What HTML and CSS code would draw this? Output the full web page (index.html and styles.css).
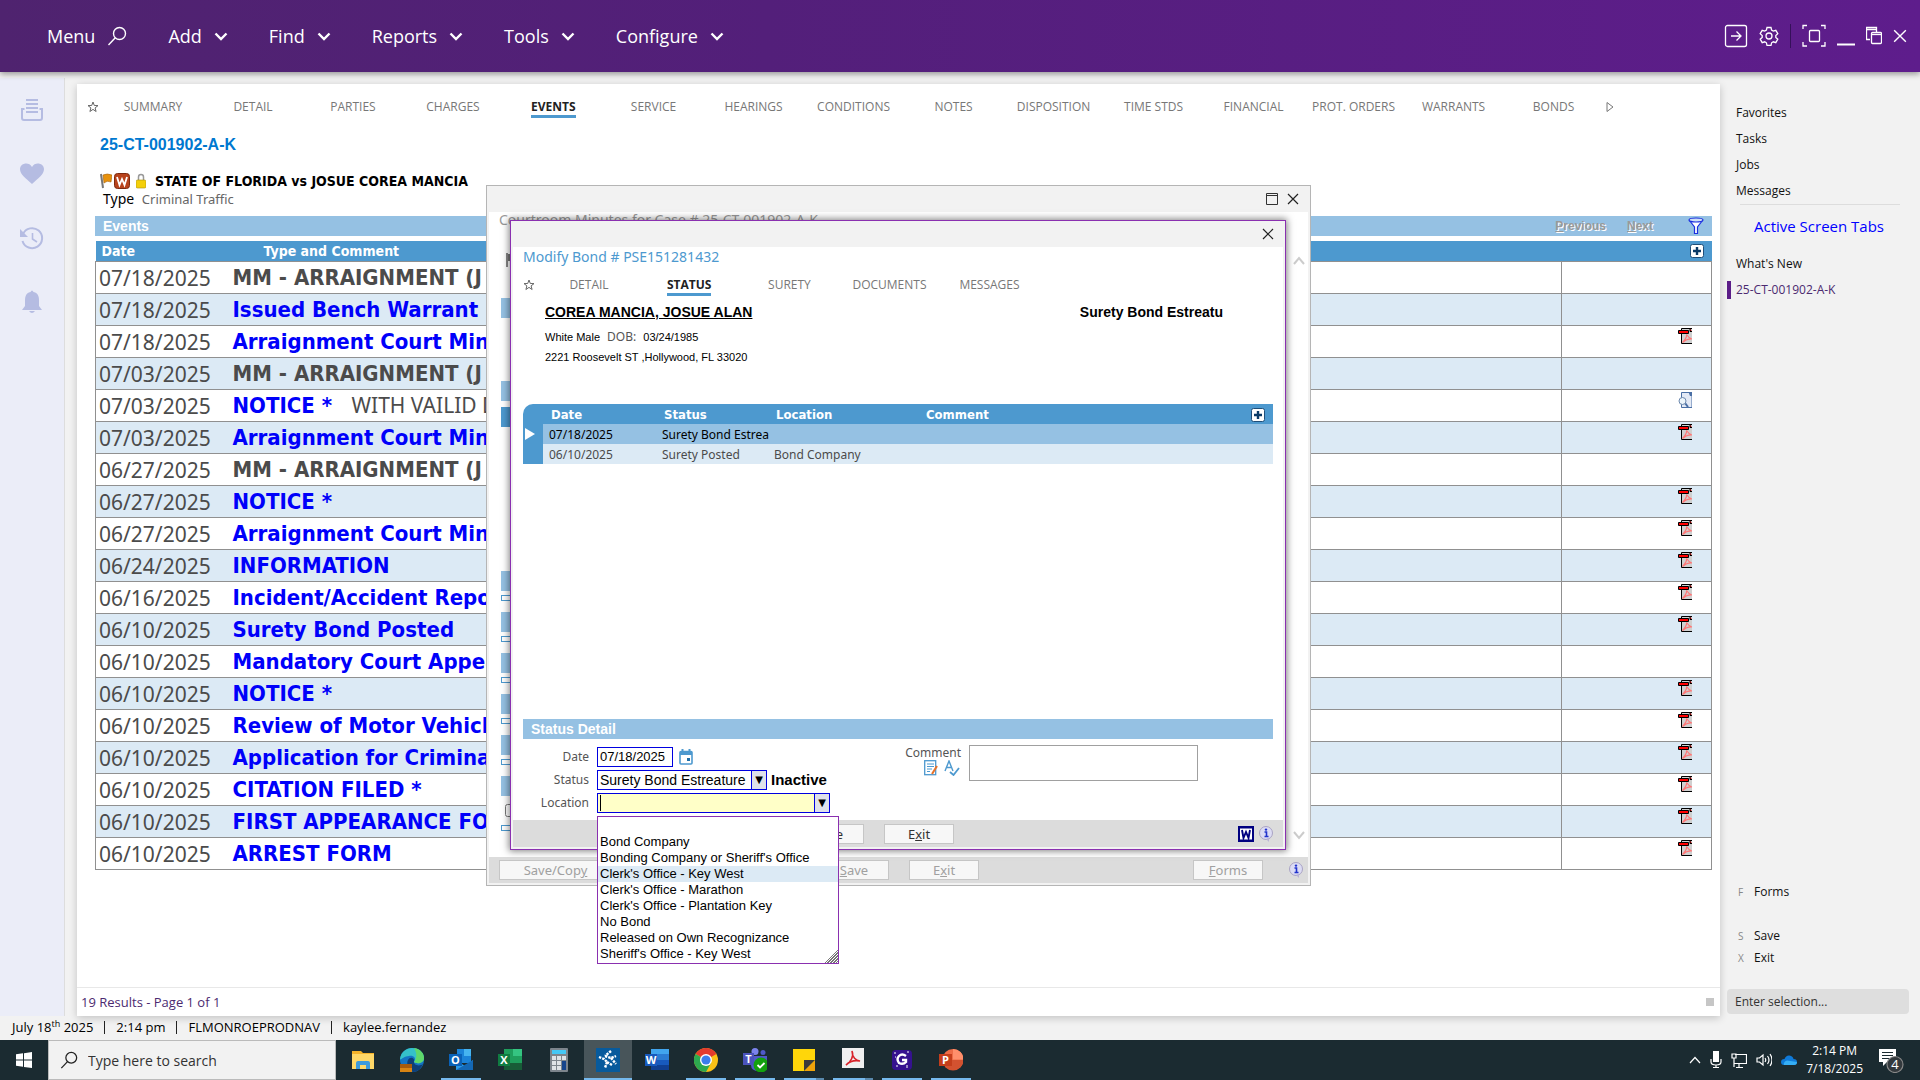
FILE: index.html
```
<!DOCTYPE html>
<html lang="en">
  <head>
    <meta charset="UTF-8" />
    <meta name="viewport" content="width=device-width, initial-scale=1.0" />
    <title>25-CT-001902-A-K</title>
    <link rel="stylesheet" href="styles.css">
  </head>
  <body>
    <!-- shared icons -->
    <svg class="symbols" aria-hidden="true">
      <symbol id="chev" viewBox="0 0 14 14"><path d="M1.500 4.500 7 10l5.500-5.500" fill="none" stroke="currentColor" stroke-width="2.4" /></symbol>
      <symbol id="star" viewBox="0 0 12 12"><path d="M6 1l1.300 3.500 3.700.1-2.900 2.300 1 3.600L6 8.400l-3.100 2.100 1-3.600L1 4.600l3.700-.1z" fill="none" stroke="#666" /></symbol>
      <symbol id="close" viewBox="0 0 12 12"><path d="M1 1l10 10M11 1 1 11" fill="none" stroke="currentColor" stroke-width="1.2" /></symbol>
      <symbol id="search" viewBox="0 0 20 20"><circle cx="12.500" cy="7.500" r="6" fill="none" stroke="currentColor" stroke-width="1.4" /><path d="M8.300 11.800 1.500 19" stroke="currentColor" stroke-width="1.4" /></symbol>
      <symbol id="plus" viewBox="0 0 14 14"><rect x=".5" y=".5" width="13" height="13" rx="2" fill="#fff" stroke="#1f4e79" /><path d="M7 3v8M3 7h8" stroke="#0b3a66" stroke-width="2.4" /></symbol>
      <symbol id="pdf" viewBox="0 0 14 16"><path d="M3.500.5H14v15H3.500z" fill="#d0d0d0" /><path d="M14 .5H3.500v15H14" fill="none" stroke="#000" /><path d="M12 .5v3h2" fill="#e00" stroke="#000" /><path d="M4.500 14.500C7 12 9 9 8.500 6.500c2 3 3 4 5.500 4.500-3-.5-6 .5-9.500 3.500" fill="none" stroke="#f77" stroke-width="1.2" /><path d="M.5 2.500h10v3H.5z" fill="#f00" stroke="#000" /></symbol>
      <symbol id="preview" viewBox="0 0 14 16"><path d="M3.500.5h8L14 3v12.500H3.500z" fill="#e3e9f5" stroke="#4a6fa5" /><path d="M10.500 0H14v4h-2z" fill="#4a6fa5" /><path d="M7 11l3 4" stroke="#4a6fa5" stroke-width="2" /><circle cx="4.500" cy="9" r="3.500" fill="#eef6fb" stroke="#6b87ad" /></symbol>
      <symbol id="info" viewBox="0 0 16 16"><circle cx="8" cy="7" r="6.500" fill="#dcdcf4" stroke="#a9a3c4" /><path d="M8 13l3 3V12z" fill="#b9b3d6" /><path d="M6.500 6H8.500v4.500M6.500 10.500h4" stroke="#2233cc" stroke-width="1.6" fill="none" /><circle cx="8" cy="3.600" r="1.200" fill="#2233cc" /></symbol>
    </svg>

    <header class="topbar">
      <nav class="menu">
        <a href="#">Menu <svg width="20" height="20"><use href="#search" /></svg></a>
        <a href="#">Add <svg width="14" height="14"><use href="#chev" /></svg></a>
        <a href="#">Find <svg width="14" height="14"><use href="#chev" /></svg></a>
        <a href="#">Reports <svg width="14" height="14"><use href="#chev" /></svg></a>
        <a href="#">Tools <svg width="14" height="14"><use href="#chev" /></svg></a>
        <a href="#">Configure <svg width="14" height="14"><use href="#chev" /></svg></a>
      </nav>
      <div class="window-tools">
        <button aria-label="Sign out"><svg width="24" height="24" viewBox="0 0 24 24"><rect x="1.500" y="1.500" width="21" height="21" rx="2" /><path d="M7 12h9.500M12.500 7.500 17 12l-4.500 4.500" /></svg></button>
        <button aria-label="Settings"><svg width="20" height="20" viewBox="0 0 20 20"><circle cx="10" cy="10" r="3" /><path d="M8 1.500h4l.6 2.600 1.700 1 2.500-.8 2 3.400-2 1.800v1.900l2 1.800-2 3.400-2.500-.8-1.700 1-.6 2.500H8l-.6-2.500-1.700-1-2.500.8-2-3.400 2-1.800V9.500l-2-1.800 2-3.400 2.500.8 1.700-1z" /></svg></button>
        <span class="tool-line"></span>
        <button aria-label="Fit"><svg width="24" height="24" viewBox="0 0 24 24"><rect x="7.500" y="6.500" width="10" height="11" rx="1" /><path d="M1 5V1.500h4M19 1.500h4V5M1 18v4h4M19 22h4v-4" /></svg></button>
        <button aria-label="Minimize"><svg width="18" height="24" viewBox="0 0 18 24"><path d="M0 20.500h18" stroke-width="2" /></svg></button>
        <button aria-label="Restore"><svg width="16" height="20" viewBox="0 0 16 20"><path d="M4 13.500H.5v-12h10V6M.5 3.500h10" /><rect x="5.500" y="6.500" width="10" height="11" rx="1" /><path d="M5.500 8.500h10" /></svg></button>
        <button aria-label="Close"><svg width="14" height="14" viewBox="0 0 12 12"><use href="#close" /></svg></button>
      </div>
    </header>

    <div class="workspace">
      <aside class="rail">
        <svg width="24" height="24" viewBox="0 0 24 24"><path d="M6 2h12M6 6h12M6 10h12M6 14h12" stroke-width="2" /><path d="M4.500 11H2v9q0 2 2 2h16q2 0 2-2v-9h-2.500" stroke-width="2" /></svg>
        <svg width="24" height="24" viewBox="0 0 24 24"><path class="solid" d="M12 22C6 16 0 13 0 7c0-6 9-8 12-2 3-6 12-4 12 2 0 6-6 9-12 15z" /></svg>
        <svg width="24" height="24" viewBox="0 0 24 24"><path d="M3 8a10 10 0 1 1-.5 7" stroke-width="2" /><path class="solid" d="M0 3v8h8z" /><path d="M12.500 7v6l4.500 3" stroke-width="1.6" /></svg>
        <svg width="22" height="24" viewBox="0 0 22 24"><path class="solid" d="M9.500 2q1.500-3 3 0c5 1 5.500 5 5.500 9v5l3 4H1l3-4v-5c0-4 .5-8 5.500-9zM8 21h6q-3 4-6 0z" /></svg>
      </aside>

      <main class="case">
        <nav class="tabs">
          <svg width="12" height="12"><use href="#star" /></svg>
          <a href="#">SUMMARY</a><a href="#">DETAIL</a><a href="#">PARTIES</a><a href="#">CHARGES</a>
          <a href="#" class="active">EVENTS</a><a href="#">SERVICE</a><a href="#">HEARINGS</a>
          <a href="#">CONDITIONS</a><a href="#">NOTES</a><a href="#">DISPOSITION</a><a href="#">TIME STDS</a>
          <a href="#">FINANCIAL</a><a href="#">PROT. ORDERS</a><a href="#">WARRANTS</a><a href="#">BONDS</a>
          <svg width="8" height="12" viewBox="0 0 8 12"><path d="M1 1.500 7 6l-6 4.500z" fill="none" stroke="#777" /></svg>
        </nav>

        <div class="case-body">
          <h1>25-CT-001902-A-K</h1>
          <div class="case-title">
            <svg width="12" height="16" viewBox="0 0 12 16"><path d="M1 1l2 14" stroke="#777" stroke-width="2" /><path d="M3 2q4-2 9 0l-1 7q-4-2-7 1z" fill="#e8920c" stroke="#a65f08" stroke-width=".6" /></svg>
            <svg width="16" height="16" viewBox="0 0 16 16"><rect x=".5" y=".5" width="15" height="15" rx="3" fill="#b8431c" stroke="#7d2a10" /><path d="M3 4l2.500 8L8 6l2.500 6L13 4" fill="none" stroke="#fff" stroke-width="1.8" /></svg>
            <svg class="lock" width="10" height="16" viewBox="0 0 10 16"><path d="M2.500 8V4q0-2.500 2.500-2.500T7.500 4v4" fill="none" stroke="#999" stroke-width="1.5" /><rect y="7" width="10" height="8" rx="1.500" fill="#f4cf0a" stroke="#a98d0a" stroke-width=".6" /></svg>
            <b>STATE OF FLORIDA vs JOSUE COREA MANCIA</b>
          </div>
          <p class="case-type">Type <span>Criminal Traffic</span></p>

          <div class="section-bar">
            <h2>Events</h2>
            <button class="pager" disabled><u>P</u>revious</button>
            <button class="pager" disabled><u>N</u>ext</button>
            <svg width="16" height="18" viewBox="0 0 16 18"><path d="M1.500 3.500 6.500 10v6.500h3V10l5-6.500" fill="#fff" stroke="#1a2ee0" stroke-width="1.2" /><ellipse cx="8" cy="3" rx="7" ry="2" fill="#cfe0f5" stroke="#1a2ee0" stroke-width="1.2" /></svg>
          </div>

          <table class="events">
            <thead>
              <tr><th class="col-date">Date</th><th class="col-type">Type and Comment</th><th></th><th class="col-doc"><svg width="14" height="14"><use href="#plus" /></svg></th></tr>
            </thead>
            <tbody>
              <tr><td>07/18/2025</td><td><b>MM - ARRAIGNMENT (J</b></td><td></td><td></td></tr>
              <tr><td>07/18/2025</td><td><a href="#">Issued Bench Warrant</a></td><td></td><td></td></tr>
              <tr><td>07/18/2025</td><td><a href="#">Arraignment Court Min</a></td><td></td><td><svg><use href="#pdf" /></svg></td></tr>
              <tr><td>07/03/2025</td><td><b>MM - ARRAIGNMENT (J</b></td><td></td><td></td></tr>
              <tr><td>07/03/2025</td><td><a href="#">NOTICE *</a> <span class="note">WITH VAILID D</span></td><td></td><td><svg><use href="#preview" /></svg></td></tr>
              <tr><td>07/03/2025</td><td><a href="#">Arraignment Court Min</a></td><td></td><td><svg><use href="#pdf" /></svg></td></tr>
              <tr><td>06/27/2025</td><td><b>MM - ARRAIGNMENT (J</b></td><td></td><td></td></tr>
              <tr><td>06/27/2025</td><td><a href="#">NOTICE *</a></td><td></td><td><svg><use href="#pdf" /></svg></td></tr>
              <tr><td>06/27/2025</td><td><a href="#">Arraignment Court Min</a></td><td></td><td><svg><use href="#pdf" /></svg></td></tr>
              <tr><td>06/24/2025</td><td><a href="#">INFORMATION</a></td><td></td><td><svg><use href="#pdf" /></svg></td></tr>
              <tr><td>06/16/2025</td><td><a href="#">Incident/Accident Repo</a></td><td></td><td><svg><use href="#pdf" /></svg></td></tr>
              <tr><td>06/10/2025</td><td><a href="#">Surety Bond Posted</a></td><td></td><td><svg><use href="#pdf" /></svg></td></tr>
              <tr><td>06/10/2025</td><td><a href="#">Mandatory Court Appea</a></td><td></td><td></td></tr>
              <tr><td>06/10/2025</td><td><a href="#">NOTICE *</a></td><td></td><td><svg><use href="#pdf" /></svg></td></tr>
              <tr><td>06/10/2025</td><td><a href="#">Review of Motor Vehicl</a></td><td></td><td><svg><use href="#pdf" /></svg></td></tr>
              <tr><td>06/10/2025</td><td><a href="#">Application for Crimina</a></td><td></td><td><svg><use href="#pdf" /></svg></td></tr>
              <tr><td>06/10/2025</td><td><a href="#">CITATION FILED *</a></td><td></td><td><svg><use href="#pdf" /></svg></td></tr>
              <tr><td>06/10/2025</td><td><a href="#">FIRST APPEARANCE FO</a></td><td></td><td><svg><use href="#pdf" /></svg></td></tr>
              <tr><td>06/10/2025</td><td><a href="#">ARREST FORM</a></td><td></td><td><svg><use href="#pdf" /></svg></td></tr>
            </tbody>
          </table>
        </div>

        <footer class="results">19 Results - Page 1 of 1 <span class="grip"></span></footer>
      </main>

      <aside class="side">
        <a href="#">Favorites</a>
        <a href="#">Tasks</a>
        <a href="#">Jobs</a>
        <a href="#">Messages</a>
        <hr>
        <h3>Active Screen Tabs</h3>
        <a href="#">What's New</a>
        <a href="#" class="current">25-CT-001902-A-K</a>
        <div class="side-keys">
          <a href="#" class="forms-key"><kbd>F</kbd>Forms</a>
          <a href="#"><kbd>S</kbd>Save</a>
          <a href="#"><kbd>X</kbd>Exit</a>
        </div>
        <input type="text" aria-label="Enter selection" placeholder="Enter selection...">
      </aside>
    </div>

    <footer class="status">
      <span>July 18<sup>th</sup> 2025</span><i></i><span>2:14 pm</span><i></i><span>FLMONROEPRODNAV</span><i></i><span>kaylee.fernandez</span>
    </footer>

    <!-- courtroom minutes window -->
    <section class="window minutes">
      <div class="titlebar">
        <button aria-label="Maximize"><svg width="12" height="12" viewBox="0 0 12 12"><path d="M.5.5h11v11H.5zM.5 2.500h11" fill="none" stroke="#333" /></svg></button>
        <button aria-label="Close"><svg width="12" height="12"><use href="#close" /></svg></button>
      </div>
      <div class="minutes-body">
        <div class="minutes-content">
          <p>Courtroom Minutes for Case # 25-CT-001902-A-K</p>
          <svg class="flag" width="12" height="14" viewBox="0 0 12 14"><path d="M1 0v14" stroke="#888" stroke-width="2" /><path d="M2 1h9v7H2z" fill="#777" /></svg>
          <div class="bar first"></div>
          <div class="bar second"></div>
          <div class="bar dark"></div>
          <div class="bar third"></div><div class="line"></div>
          <div class="bar"></div><div class="line"></div>
          <div class="bar"></div><div class="line"></div>
          <div class="bar"></div><div class="line"></div>
          <div class="bar"></div><div class="line"></div>
          <div class="bar"></div>
          <input type="checkbox" aria-label="Include">
          <div class="line"></div>
        </div>
        <div class="scroll">
          <svg width="12" height="12" viewBox="0 0 12 12"><path d="M1 9l5-6 5 6" /></svg>
          <svg width="12" height="12" viewBox="0 0 12 12"><path d="M1 3l5 6 5-6" /></svg>
        </div>
      </div>
      <div class="button-bar">
        <button class="btn wide" disabled>Save/Cop<u>y</u></button>
        <button class="btn save" disabled><u>S</u>ave</button>
        <button class="btn" disabled>E<u>x</u>it</button>
        <button class="btn forms" disabled><u>F</u>orms</button>
        <svg width="16" height="16"><use href="#info" /></svg>
      </div>
    </section>

    <!-- modify bond window -->
    <section class="window bond">
      <div class="titlebar">
        <button aria-label="Close"><svg width="12" height="12"><use href="#close" /></svg></button>
      </div>
      <div class="bond-body">
        <h2>Modify Bond # PSE151281432</h2>
        <nav class="tabs">
          <svg width="12" height="12"><use href="#star" /></svg>
          <a href="#">DETAIL</a><a href="#" class="active">STATUS</a><a href="#">SURETY</a><a href="#">DOCUMENTS</a><a href="#">MESSAGES</a>
        </nav>
        <div class="person">
          <div>
            <a href="#" class="name">COREA MANCIA, JOSUE ALAN</a>
            <p>White Male <span class="dob">DOB:</span> 03/24/1985</p>
            <p>2221 Roosevelt ST ,Hollywood, FL 33020</p>
          </div>
          <b>Surety Bond Estreatu</b>
        </div>

        <table class="history">
          <thead>
            <tr><th class="gutter"></th><th class="h-date">Date</th><th class="h-status">Status</th><th class="h-location">Location</th><th>Comment</th><th class="h-add"><svg width="14" height="14"><use href="#plus" /></svg></th></tr>
          </thead>
          <tbody>
            <tr class="selected"><td class="gutter"><svg width="10" height="12" viewBox="0 0 10 12"><path d="M0 0l10 6-10 6z" fill="#fff" /></svg></td><td>07/18/2025</td><td>Surety Bond Estrea</td><td></td><td></td><td></td></tr>
            <tr><td class="gutter"></td><td>06/10/2025</td><td>Surety Posted</td><td>Bond Company</td><td></td><td></td></tr>
          </tbody>
        </table>

        <div class="section-bar detail-bar"><h2>Status Detail</h2></div>
        <form class="detail">
          <div class="fields">
            <div class="field">
              <label for="date">Date</label>
              <input id="date" type="text" value="07/18/2025">
              <svg width="14" height="16" viewBox="0 0 14 16"><rect x="1" y="2.500" width="12" height="12.500" rx="1" fill="#fff" stroke="#4d99cf" stroke-width="1.6" /><path d="M1 2h12v4H1z" fill="#4d99cf" /><path d="M3.500 0v3M10.500 0v3" stroke="#4d99cf" stroke-width="2" /><path d="M8 9h3v3H8z" fill="#1f6fa8" /></svg>
            </div>
            <div class="field">
              <label for="status">Status</label>
              <div class="combo combo-status">
                <select id="status"><option>Surety Bond Estreature</option></select>
              </div>
              <b>Inactive</b>
            </div>
            <div class="field">
              <label for="location">Location</label>
              <div class="combo combo-location">
                <select id="location"><option></option></select>
                <ul class="options" role="listbox">
                  <li></li>
                  <li>Bond Company</li>
                  <li>Bonding Company or Sheriff's Office</li>
                  <li class="hover">Clerk's Office - Key West</li>
                  <li>Clerk's Office - Marathon</li>
                  <li>Clerk's Office - Plantation Key</li>
                  <li>No Bond</li>
                  <li>Released on Own Recognizance</li>
                  <li>Sheriff's Office - Key West</li>
                </ul>
              </div>
            </div>
          </div>
          <div class="comment">
            <div class="comment-label">
              <label for="comment">Comment</label>
              <div>
                <svg width="14" height="16" viewBox="0 0 14 16"><rect x=".7" y=".7" width="11" height="14" fill="#fff" stroke="#4d99cf" stroke-width="1.3" /><path d="M3 4h7M3 6.500h7M3 9h5M3 11.500h3" stroke="#4d99cf" /><path d="M13 6l-5 8" stroke="#e8722a" stroke-width="2" /></svg>
                <svg width="16" height="16" viewBox="0 0 16 16"><path d="M1 11 5 1l4 10M2.500 7.500h5" fill="none" stroke="#4d99cf" stroke-width="1.4" /><path d="M6 12l3.500 3L15 8" fill="none" stroke="#4d99cf" stroke-width="1.8" /></svg>
              </div>
            </div>
            <textarea id="comment"></textarea>
          </div>
        </form>
      </div>
      <div class="button-bar">
        <button class="btn"><u>S</u>ave</button>
        <button class="btn">E<u>x</u>it</button>
        <svg class="word" width="16" height="16" viewBox="0 0 16 16"><path d="M0 0h16v16H0z" fill="#000080" /><path d="M2 2.500h12v11H2z" fill="#fff" /><path d="M4 4l1.500 8L8 6l2.500 6L12 4" fill="none" stroke="#000080" stroke-width="1.9" /></svg>
        <svg width="16" height="16"><use href="#info" /></svg>
      </div>
    </section>

    <!-- desktop taskbar -->
    <footer class="taskbar">
      <button class="start" aria-label="Start"><svg width="16" height="16" viewBox="0 0 16 16"><path d="M0 2.300 7 1.300v6.300H0zM8 1.200 16 0v7.600H8zM0 8.500h7v6.300l-7-1zM8 8.500h8V16l-8-1.100z" fill="#fff" /></svg></button>
      <label class="find"><svg width="18" height="18"><use href="#search" /></svg><input type="text" placeholder="Type here to search"></label>
      <div class="apps">
        <button aria-label="File Explorer"><svg viewBox="0 0 24 24"><path d="M1 3h9l2 2h11v16H1z" fill="#f5b32a" /><path d="M1 6h22v15H1z" fill="#ffd868" /><path d="M5 21v-6q0-2 2-2h10q2 0 2 2v6h-4v-4H9v4z" fill="#3d9bdc" /></svg></button>
        <button aria-label="Edge"><svg viewBox="0 0 24 24"><circle cx="12" cy="12" r="12" fill="#1474c4" /><path d="M0 11C1 4 6 0 12 0c8 0 12 5 12 10 0 6-8 6-10 4 3-4-1-7-5-6-5 0-9 5-9 3z" fill="#35c1c9" /><path d="M14 0c7 1 10 6 10 10 0 6-8 6-10 4 3-4 3-9 0-14z" fill="#5fd86a" /><path d="M8 12c2-4 7-2 6 1-1 4 5 6 9 3-2 5-6 8-10 8-5-3-7-8-5-12z" fill="#0e3f78" /><path d="M0 16h12v8H0z" fill="#d88413" /><path d="M0 16h12v4H0z" fill="#a65a0c" /></svg></button>
        <button class="open" aria-label="Outlook"><svg viewBox="0 0 24 24"><path d="M8 1h14v14H8z" fill="#1b83d8" /><path d="M15 1h7v7h-7z" fill="#46b4f0" /><path d="M7 12l9 6 8-6v10H7z" fill="#2899e8" /><path d="M24 12v10L7 22z" fill="#1468b5" /><path d="M0 6h13v12H0z" fill="#0a62b8" /><text x="6.500" y="16">O</text></svg></button>
        <button aria-label="Excel"><svg viewBox="0 0 24 24"><path d="M6 1h18v21H6z" fill="#1f9e5c" /><path d="M15 1h9v7h-9z" fill="#35c481" /><path d="M6 15h18v7H6z" fill="#185c37" /><path d="M0 6h12v12H0z" fill="#107c41" /><text x="6" y="16">X</text></svg></button>
        <button aria-label="Calculator"><svg viewBox="0 0 24 24"><rect x="3" width="18" height="24" rx="1" fill="#7d858c" /><path d="M5 2h14v4H5z" fill="#45c8f5" /><path d="M5 8h4v4H5zM10 8h4v4h-4zM15 8h4v4h-4zM5 13h4v4H5zM10 13h4v4h-4zM5 18h4v4H5zM10 18h4v4h-4z" fill="#dfe3e6" /><path d="M15 13h4v9h-4z" fill="#17458c" /></svg></button>
        <button class="open current" aria-label="Court system"><svg viewBox="0 0 24 24"><path d="M0 0h24v24H0z" fill="#075a9c" /><g fill="none" stroke="#fff" stroke-width="2.4" stroke-dasharray="2.4 1"><path d="M15 3 9 8M3 9l5 2 3 3M9 8l6 2 5-2M15 10l5 6M11 14l-2 6M11 14l5 3" /></g></svg></button>
        <button aria-label="Word"><svg viewBox="0 0 24 24"><path d="M6 1h18v21H6z" fill="#2b7cd3" /><path d="M6 1h18v5H6z" fill="#41a5ee" /><path d="M6 12h18v5H6z" fill="#185abd" /><path d="M6 17h18v5H6z" fill="#103f91" /><path d="M0 6h12v12H0z" fill="#185abd" /><text x="6" y="16">W</text></svg></button>
        <button class="open" aria-label="Chrome"><svg viewBox="0 0 24 24"><circle cx="12" cy="12" r="12" fill="#fbc116" /><path d="M12 12 1.600 6A12 12 0 0 1 22.400 6z" fill="#e33b2e" /><path d="M12 12 1.600 6A12 12 0 0 0 12 24l5-9z" fill="#2da94f" /><circle cx="12" cy="12" r="6" fill="#fff" /><circle cx="12" cy="12" r="4.600" fill="#3b7ded" /></svg></button>
        <button class="open" aria-label="Teams"><svg viewBox="0 0 24 24"><circle cx="12" cy="3.500" r="3.500" fill="#7b83eb" /><circle cx="20" cy="4.500" r="2.500" fill="#5059c9" /><path d="M6 8h18v7q0 8-8 8t-8-6z" fill="#5059c9" /><path d="M0 5h11v12H0z" fill="#4b53bc" /><text x="5.500" y="15">T</text><circle cx="18" cy="17" r="7.500" fill="#13a10e" /><path d="M14.500 17l2.500 2.500 4.500-4.500" fill="none" stroke="#fff" stroke-width="1.8" /></svg></button>
        <button class="open multi" aria-label="Sticky Notes"><svg viewBox="0 0 24 24"><path d="M1 1h22v22H1z" fill="#ffd60a" /><path d="M12 23h11V12z" fill="#f0a30a" /><path d="M12 12h11L12 23z" fill="#3b3b3b" /></svg></button>
        <button class="open multi" aria-label="Acrobat"><svg viewBox="0 0 24 24"><path d="M1 0h22v20H1z" fill="#f0f0f0" /><path d="M5 17c5-3 8-9 6-14 0 6 4 10 8 10-5-1-10 0-14 4z" fill="none" stroke="#d8232a" stroke-width="1.6" /></svg></button>
        <button class="open" aria-label="Snagit"><svg viewBox="0 0 24 24"><rect x="2" y="2" width="20" height="20" rx="4" fill="#35128f" /><path d="M16 8q-4-3-7 0t0 7q4 2 7-1v-2h-4" fill="none" stroke="#fff" stroke-width="2.4" /><path d="M4 5h2M5 9h1M17 4h2M6 18h2M17 17v3" stroke="#fff" /></svg></button>
        <button class="open" aria-label="PowerPoint"><svg viewBox="0 0 24 24"><circle cx="14" cy="11.500" r="10.500" fill="#ed6c47" /><path d="M14 1a10.500 10.500 0 0 1 10.500 10.500H14z" fill="#ff8f6b" /><path d="M3.500 12h21a10.500 10.500 0 0 1-21 0z" fill="#d35230" /><path d="M0 6h13v12H0z" fill="#c43e1c" /><text x="6.500" y="16">P</text></svg></button>
      </div>
      <div class="tray">
        <svg width="12" height="8" viewBox="0 0 12 8"><path d="M1 7l5-5.500L11 7" /></svg>
        <svg width="12" height="18" viewBox="0 0 12 18"><rect x="3" width="6" height="11" fill="#fff" stroke="none" /><path d="M1 8v3q0 3 5 3t5-3V8M6 14v3M3 16.500h6" /></svg>
        <svg width="16" height="16" viewBox="0 0 16 16"><path d="M4 2.500h11.500v9H3M8 12v3M5 15.500h7M1 2h4v4H1zM3 6v9" /></svg>
        <svg width="16" height="14" viewBox="0 0 16 14"><path d="M1 5v4h2.500L7 12V2L3.500 5zM9 5q1.500 2 0 4M11.500 3q3 4 0 8M14 1q4 6 0 12" /></svg>
        <svg width="16" height="12" viewBox="0 0 16 12"><path d="M3 11Q0 11 0 8t3.500-3Q5 1 8.500 1.500 12 2 12.500 5 16 5 16 8t-3 3z" fill="#0f7ad8" stroke="none" /><path d="M3 11Q2 8 6 6.500L16 8q0 3-3 3z" fill="#35aef5" stroke="none" /></svg>
        <div class="clock"><span>2:14 PM</span><span>7/18/2025</span></div>
        <svg width="26" height="26" viewBox="0 0 26 26"><path d="M1 2h17v13h-9l-4 4v-4H1z" fill="#fff" stroke="none" /><path d="M4 5.500h11M4 8.500h11M4 11.500h7" stroke="#1b2b31" /><circle cx="17" cy="17.500" r="8" fill="#33393d" stroke="#888" /><text x="17" y="22">4</text></svg>
      </div>
    </footer>
  </body>
</html>
```
FILE: styles.css
```
* {
  box-sizing: border-box;
}
body {
  margin: 0;
  height: 100vh;
  display: flex;
  flex-direction: column;
  overflow: hidden;
  background: #f2f2f2;
  color: #222;
  font-family: "Open Sans", sans-serif;
  font-size: 12px;
}
h1, h2, h3, p, ul {
  margin: 0;
  padding: 0;
}
a {
  color: inherit;
  text-decoration: none;
}
svg {
  flex: none;
  display: block;
}
button {
  padding: 0;
  border: none;
  background: none;
  color: inherit;
  font: inherit;
}
.symbols {
  position: absolute;
  width: 0;
  height: 0;
}

/* top bar */
.topbar {
  flex: none;
  height: 72px;
  padding: 0 13px 0 47px;
  display: flex;
  align-items: center;
  justify-content: space-between;
  background: linear-gradient(to right, #4f236f, #531f7a 40%, #5e1d8c);
  box-shadow: 0 2px 6px rgba(0, 0, 0, 0.4);
  color: #fff;
  z-index: 1;
}
.menu {
  display: flex;
  gap: 41px;
}
.menu a {
  display: flex;
  align-items: center;
  gap: 12px;
  font-size: 18px;
}
.window-tools {
  display: flex;
  align-items: center;
  gap: 11px;
}
.window-tools svg {
  fill: none;
  stroke: #fff;
  stroke-width: 1.3;
}
.tool-line {
  width: 1px;
  height: 24px;
  background: #35105a;
}

.workspace {
  flex: 1;
  min-height: 0;
  display: flex;
}

/* left rail */
.rail {
  width: 65px;
  margin-top: 6px;
  padding-top: 20px;
  display: flex;
  flex-direction: column;
  align-items: center;
  gap: 40px;
  background: #ebedf8;
  border-right: 1px solid #ddd;
}
.rail svg {
  fill: none;
  stroke: #b5bce2;
}
.rail .solid {
  fill: #b5bce2;
  stroke: none;
}

/* case panel */
.case {
  flex: 1;
  min-width: 0;
  margin: 12px 0 0 12px;
  display: flex;
  flex-direction: column;
  background: #fff;
  box-shadow: 0 2px 8px rgba(0, 0, 0, 0.2);
}
.tabs {
  display: flex;
  align-items: center;
}
.tabs a {
  width: 100px;
  display: flex;
  justify-content: center;
  color: #777;
  line-height: 16px;
  padding-bottom: 3px;
  margin-top: 3px;
  white-space: nowrap;
}
.tabs .active {
  width: auto;
  margin-left: 28px;
  margin-right: 28px;
  padding-bottom: 0;
  border-bottom: 3px solid #4d99cf;
  color: #222;
  font-weight: bold;
}
.case .tabs {
  padding: 12px 0 0 10px;
}
.tabs svg + a {
  margin-left: 4px;
}
.case .tabs a + svg {
  margin-left: 2px;
}
.case-body {
  flex: 1;
  padding: 17px 8px 0 18px;
}
.case-body h1 {
  padding-left: 5px;
  color: #0078d0;
  font: bold 16px/20px "Liberation Sans", sans-serif;
}
.case-title {
  margin-top: 16px;
  padding-left: 5px;
  display: flex;
  align-items: flex-end;
  gap: 2px;
  height: 18px;
  color: #000;
  font: 14px/16px "DejaVu Sans Condensed", "Noto Sans", sans-serif;
}
.case-title .lock {
  margin: 0 7px 0 4px;
}
.case-type {
  padding-left: 8px;
  color: #000;
  font: 14px/20px "Noto Sans", sans-serif;
}
.case-type span {
  margin-left: 4px;
  color: #666;
  font-size: 13px;
}
.section-bar {
  height: 20px;
  padding-left: 8px;
  display: flex;
  align-items: center;
  background: #95c1e3;
}
.section-bar h2 {
  flex: 1;
  color: #fff;
  font: bold 14px/20px "Liberation Sans", sans-serif;
}
.case .section-bar {
  margin-top: 7px;
  padding-right: 8px;
}
.pager {
  margin-right: 21px;
  color: #999;
  text-shadow: 1px 1px #fff;
  font: bold 12px/20px "Liberation Sans", sans-serif;
}
.pager + svg {
  margin-left: 14px;
}

.events {
  width: 100%;
  margin-top: 5px;
  border-collapse: collapse;
  table-layout: fixed;
  color: #4b4b4b;
  font: 21px/24px "Noto Sans", sans-serif;
}
.events th {
  height: 20px;
  padding: 0 6px;
  background: #4d99cf;
  color: #fff;
  font: bold 14px/20px "DejaVu Sans Condensed", "Noto Sans", sans-serif;
  text-align: left;
}
.events .col-date {
  width: 134px;
}
.events .col-type {
  width: 760px;
  padding-left: 34px;
}
.events .col-doc {
  width: 150px;
  padding-right: 8px;
}
.col-doc svg {
  margin-left: auto;
}
.events td {
  height: 32px;
  padding: 0 3px;
  border-top: 1px solid #909090;
  border-bottom: 1px solid #909090;
  white-space: nowrap;
}
.events td:first-child {
  border-left: 1px solid #909090;
}
.events td:last-child {
  padding: 2px 19px 0 0;
  border-left: 1px solid #909090;
  border-right: 1px solid #909090;
  vertical-align: top;
}
.events td svg {
  width: 14px;
  height: 16px;
  margin-left: auto;
}
.events tbody tr:nth-child(even) {
  background: #dceaf5;
}
.events td a,
.events td b {
  font: bold 22px/24px "DejaVu Sans Condensed", "Noto Sans", sans-serif;
}
.events td a {
  color: #0000fa;
}
.note {
  margin-left: 14px;
}
.results {
  height: 29px;
  padding: 0 6px 0 4px;
  display: flex;
  align-items: center;
  justify-content: space-between;
  border-top: 1px solid #e8e8e8;
  color: #4b2a70;
  font-size: 13px;
}
.grip {
  width: 8px;
  height: 8px;
  background: #c6c6c6;
}

/* right sidebar */
.side {
  width: 200px;
  padding: 28px 11px 2px 7px;
  display: flex;
  flex-direction: column;
  color: #111;
}
.side a {
  height: 18px;
  margin: 4px 0;
  padding-left: 9px;
  line-height: 18px;
}
.side hr {
  width: 160px;
  margin: 0 0 0 13px;
  border: none;
  border-top: 1px solid #ddd;
}
.side h3 {
  margin: 10px 0 14px 27px;
  color: #00f;
  font-size: 15px;
  font-weight: normal;
  line-height: 22px;
}
.side .current {
  padding-left: 5px;
  border-left: 4px solid #5b1d88;
  color: #4b2a70;
}
.side-keys {
  margin-top: auto;
  display: flex;
  flex-direction: column;
}
.side-keys a {
  display: flex;
  margin: 2px 0;
}
.side-keys .forms-key {
  margin-bottom: 24px;
}
.side-keys kbd {
  width: 18px;
  padding-left: 2px;
  color: #888;
  font: 10px/18px "Open Sans", sans-serif;
}
.side input {
  flex: none;
  width: 100%;
  height: 25px;
  margin-top: 20px;
  padding: 0 8px;
  border: none;
  border-radius: 4px;
  background: #dedede;
  font: 12px "Open Sans", sans-serif;
}
input::placeholder {
  color: #333;
  opacity: 1;
}

.status {
  flex: none;
  height: 24px;
  padding: 0 0 2px 12px;
  display: flex;
  align-items: center;
  color: #000;
  font-size: 13px;
}
.status sup {
  font-size: 9px;
  line-height: 8px;
}
.status i {
  width: 1px;
  height: 13px;
  margin: 0 11px;
  background: #222;
}

/* windows */
.window {
  position: absolute;
  display: flex;
  flex-direction: column;
  padding: 0 2px 2px;
  background: #f2f2f2;
  z-index: 2;
}
.titlebar {
  height: 26px;
  display: flex;
  align-items: center;
  justify-content: flex-end;
  gap: 9px;
  color: #222;
}
.button-bar {
  display: flex;
  align-items: center;
  background: #dcdcdc;
}
.btn {
  width: 70px;
  height: 20px;
  border: 1px solid #c6c6c6;
  background: #f7f7f7;
  color: #333;
  font: 13px/16px "Noto Sans", sans-serif;
}
.btn:disabled {
  color: #a0a0a0;
}
.minutes {
  left: 486px;
  top: 185px;
  width: 825px;
  height: 701px;
  border: 1px solid #b5b5b5;
}
.minutes .titlebar {
  padding-right: 9px;
}
.minutes-body {
  flex: 1;
  display: flex;
  background: #fff;
}
.minutes-content {
  flex: 1;
  padding: 0 20px 0 12px;
}
.minutes-content p {
  margin-left: -2px;
  color: #999;
  font: 14px/16px "Noto Sans", sans-serif;
}
.minutes-content .flag {
  margin: 25px 0 0 5px;
}
.bar {
  height: 20px;
  margin-top: 11px;
  background: #95c1e3;
}
.bar.first {
  margin-top: 31px;
}
.bar.second {
  margin-top: 63px;
}
.bar.dark {
  margin-top: 6px;
  background: #4d99cf;
}
.bar.third {
  margin-top: 144px;
}
.line {
  height: 6px;
  margin-top: 4px;
  border: 1px solid #4d99cf;
}
.minutes-content input {
  display: block;
  width: 13px;
  height: 13px;
  margin: 8px 0 8px 4px;
}
.scroll {
  width: 20px;
  padding: 43px 0 16px 5px;
  display: flex;
  flex-direction: column;
  justify-content: space-between;
}
.scroll path {
  fill: none;
  stroke: #ccc;
  stroke-width: 2;
}
.minutes .button-bar {
  height: 26px;
  padding: 0 4px 0 10px;
}
.minutes .wide {
  width: 113px;
}
.minutes .save {
  margin: 0 20px 0 207px;
}
.minutes .forms {
  margin: 0 25px 0 auto;
}

.bond {
  left: 510px;
  top: 220px;
  width: 776px;
  height: 630px;
  border: 1px solid #8a30b0;
  box-shadow: 0 0 7px 1px rgba(0, 0, 0, 0.5);
}
.bond .titlebar {
  padding-right: 9px;
}
.bond-body {
  flex: 1;
  padding: 0 10px;
  display: flex;
  flex-direction: column;
  background: #fff;
}
.bond-body > h2 {
  color: #4d99cf;
  font: 14px/20px "Noto Sans", sans-serif;
}
.bond .tabs {
  height: 30px;
  padding-top: 6px;
}
.person {
  height: 107px;
  padding: 5px 50px 0 22px;
  display: flex;
  justify-content: space-between;
  color: #000;
  font: 11px/20px "Liberation Sans", sans-serif;
}
.person .name {
  display: block;
  margin-bottom: 5px;
  font-weight: bold;
  text-decoration: underline;
}
.person .name,
.person b {
  font-size: 14px;
  line-height: 20px;
}
.dob {
  margin: 0 4px;
  color: #555;
  font: 12px/20px "Noto Sans", sans-serif;
}
.history {
  width: 100%;
  border-collapse: collapse;
  table-layout: fixed;
  color: #4b4b4b;
  font: 12px/18px "Noto Sans", sans-serif;
}
.history th,
.history td {
  height: 20px;
  padding: 2px 0 0 6px;
  text-align: left;
  white-space: nowrap;
}
.history th {
  padding-left: 8px;
  background: #4d99cf;
  color: #fff;
  font: bold 13px/18px "DejaVu Sans Condensed", "Noto Sans", sans-serif;
}
.history tbody tr {
  background: #dceaf5;
}
.history .selected {
  background: #95c1e3;
  color: #000;
}
.history .gutter {
  width: 20px;
  padding: 0 2px;
  background: #4d99cf;
}
.history th.gutter {
  border-top-left-radius: 10px;
}
.h-date {
  width: 113px;
}
.h-status {
  width: 112px;
}
.h-location {
  width: 150px;
}
.h-add {
  width: 30px;
}
.detail-bar {
  margin-top: auto;
}
.detail {
  height: 81px;
  display: flex;
  justify-content: space-between;
  align-items: flex-start;
  color: #555;
}
.fields {
  padding-top: 8px;
  display: flex;
  flex-direction: column;
  gap: 3px;
}
.field {
  display: flex;
  align-items: center;
  height: 20px;
  color: #000;
  font: 13px/20px "Liberation Sans", sans-serif;
}
.field label,
.comment label {
  width: 66px;
  margin-right: 8px;
  color: #555;
  font: 12px/16px "Noto Sans", sans-serif;
  text-align: right;
}
.field input {
  width: 76px;
  height: 20px;
  padding: 0 2px;
  border: 1px solid #0000e0;
  font: inherit;
}
.field svg {
  margin-left: 6px;
}
.field b {
  margin-left: 4px;
  font-size: 15px;
}
.combo {
  position: relative;
  height: 20px;
}
.combo select {
  width: 100%;
  height: 20px;
  padding: 0 2px;
  border: 1px solid #0000e0;
  border-radius: 0;
  appearance: none;
  background: #fff;
  color: #000;
  font: 14px "Liberation Sans", sans-serif;
}
.combo::after {
  content: "▼";
  position: absolute;
  top: 1px;
  right: 1px;
  width: 14px;
  height: 18px;
  border-left: 1px solid #0000e0;
  background: #dfe1ea;
  font: 10px/17px "DejaVu Sans", sans-serif;
  text-align: center;
}
.combo-status {
  width: 170px;
}
.combo-location {
  width: 233px;
}
.combo-location select {
  background: #ffffc8;
}
.combo-location::before {
  content: "";
  position: absolute;
  top: 2px;
  left: 3px;
  width: 1px;
  height: 16px;
  background: #000;
}
.options {
  position: absolute;
  top: 23px;
  left: 0;
  width: 242px;
  padding: 1px 0;
  border: 1px solid #8a30b0;
  background: #fff;
  list-style: none;
  z-index: 3;
}
.options::after {
  content: "";
  position: absolute;
  right: 0;
  bottom: 0;
  width: 14px;
  height: 14px;
  background: repeating-linear-gradient(135deg, #777 0 1px, #fff 1px 2px);
  clip-path: polygon(100% 0, 100% 100%, 0 100%);
}
.options li {
  height: 16px;
  padding-left: 2px;
  line-height: 16px;
}
.options .hover {
  background: #dceaf5;
}
.comment {
  display: flex;
  align-items: flex-start;
  margin-right: 75px;
  padding-top: 6px;
}
.comment-label div {
  display: flex;
  justify-content: flex-end;
  gap: 6px;
  margin-right: 9px;
}
.comment-label label {
  display: block;
  line-height: 15px;
}
.comment textarea {
  width: 229px;
  height: 36px;
  border: 1px solid #a0a0a0;
  resize: none;
}
.bond .button-bar {
  height: 27px;
  padding: 0 9px 0 281px;
  gap: 20px;
}
.bond .word {
  margin: 0 -16px 0 auto;
}

/* taskbar */
.taskbar {
  flex: none;
  height: 40px;
  display: flex;
  background: #1b2b31;
  color: #fff;
}
.start {
  width: 48px;
  display: flex;
  align-items: center;
  justify-content: center;
}
.find {
  width: 288px;
  padding-left: 11px;
  display: flex;
  align-items: center;
  gap: 8px;
  background: #f2f2f2;
  border: 1px solid #bbb;
  color: #222;
}
.find input {
  width: 200px;
  border: none;
  background: none;
  font: 14px "Open Sans", sans-serif;
}
.apps {
  display: flex;
  gap: 1px;
  padding-left: 3px;
}
.apps button {
  width: 48px;
  display: flex;
  align-items: center;
  justify-content: center;
}
.apps svg {
  width: 24px;
  height: 24px;
}
.apps text {
  fill: #fff;
  font: bold 11px "Open Sans", sans-serif;
  text-anchor: middle;
}
.apps .open {
  background: linear-gradient(#76b9ed, #76b9ed) bottom / 40px 2px no-repeat;
}
.apps .multi {
  background: linear-gradient(to right, #76b9ed 80%, #5a89ad 80%) bottom / 40px 2px no-repeat;
}
.apps .current {
  background: linear-gradient(#76b9ed, #76b9ed) bottom / 48px 2px no-repeat, #48555a;
}
.tray {
  margin-left: auto;
  padding-right: 16px;
  display: flex;
  align-items: center;
  gap: 9px;
}
.tray svg {
  fill: none;
  stroke: #fff;
  stroke-width: 1.2;
}
.tray text {
  fill: #fff;
  stroke: none;
  font: 13px "Open Sans", sans-serif;
  text-anchor: middle;
}
.clock {
  margin-right: 6px;
  display: flex;
  flex-direction: column;
  align-items: center;
  line-height: 18px;
}
```
